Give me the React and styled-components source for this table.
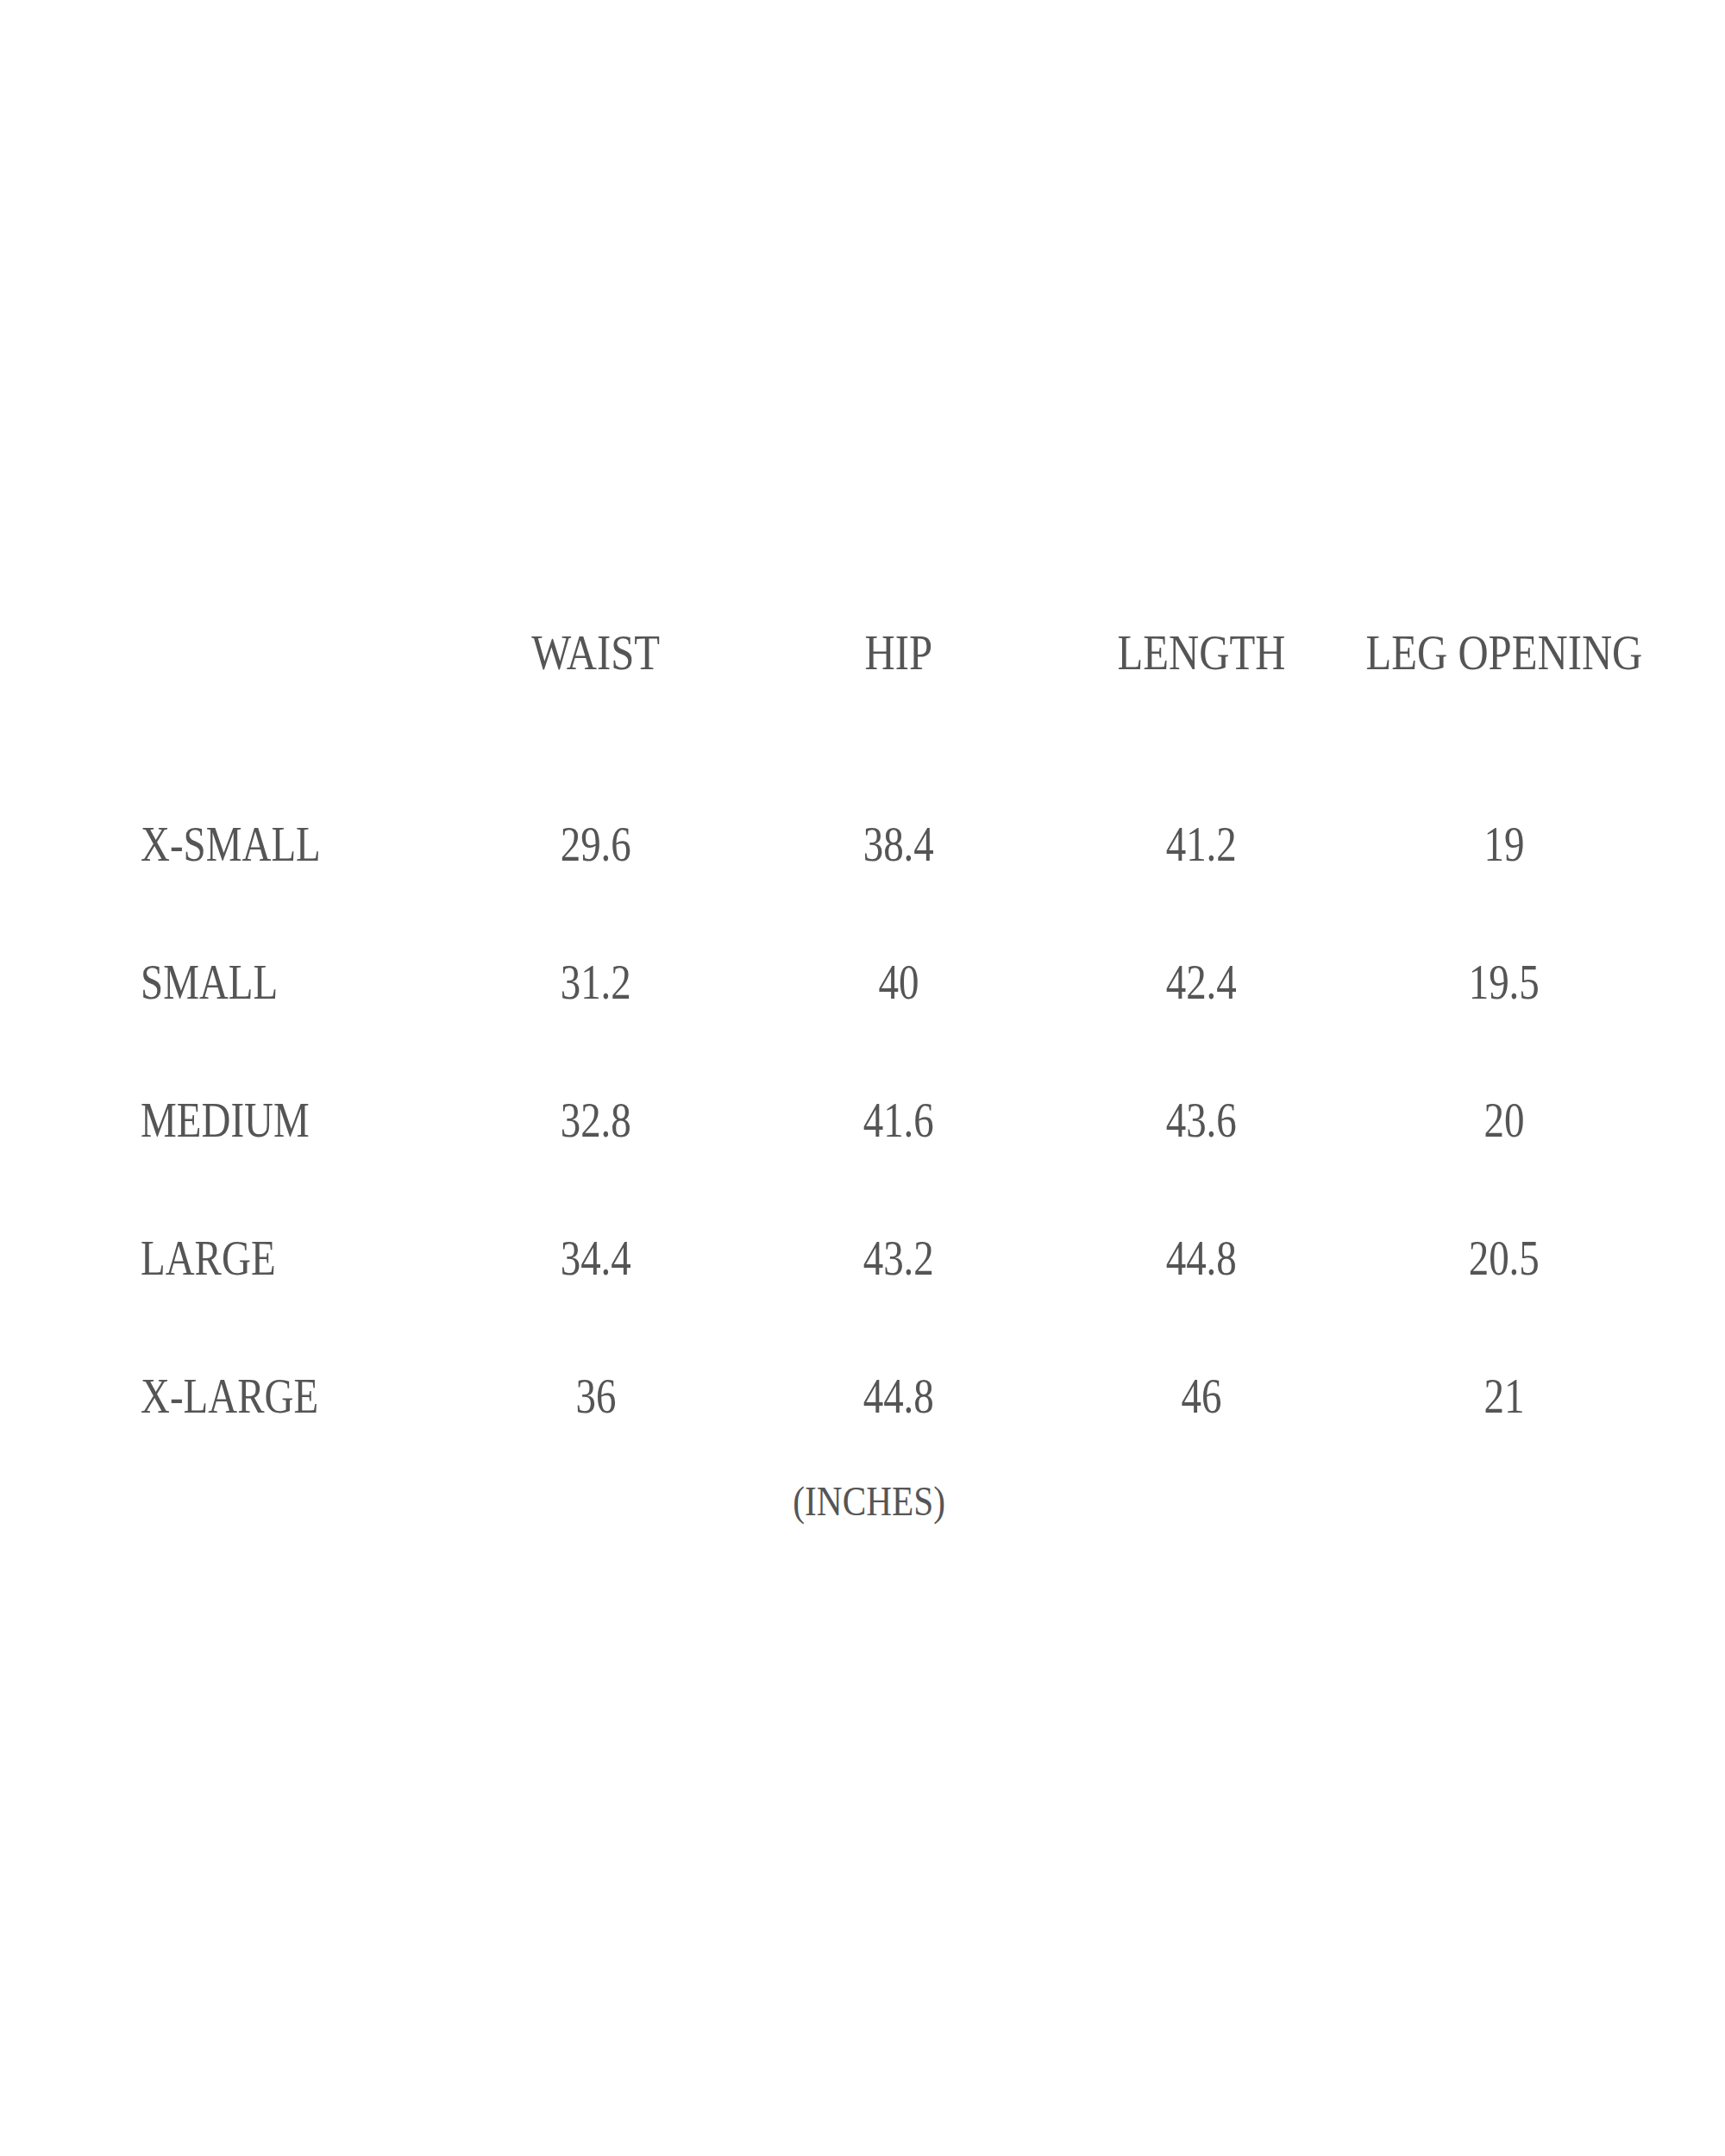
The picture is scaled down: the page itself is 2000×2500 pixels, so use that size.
import styled, {createGlobalStyle} from "styled-components";

const GlobalStyle = createGlobalStyle`
  body {
    margin: 0;
    background: #ffffff;
  }
`;

const Page = styled.div`
  width: 2000px;
  height: 2500px;
  padding-top: 677px;
  box-sizing: border-box;
  font-family: "Liberation Serif", "Times New Roman", serif;
  color: #555555;
`;

const Table = styled.div`
  margin-left: 163px;
  width: 1760px;
`;

const Row = styled.div`
  display: grid;
  grid-template-columns: 352px repeat(4, 351px);
  height: 160px;
  align-items: center;
  margin-bottom: ${p => p.$gap || 0}px;
`;

const Cell = styled.div`
  display: flex;
  justify-content: ${p => p.$left ? "flex-start" : "center"};
  font-size: 58px;
  line-height: 1;
`;

const Squeeze = styled.span`
  display: inline-block;
  flex-shrink: 0;
  white-space: nowrap;
  transform: scaleX(${p => p.$x || 0.82});
  transform-origin: ${p => p.$left ? "left" : "center"} center;
`;

const Unit = styled.div`
  width: 2000px;
  display: flex;
  justify-content: center;
  font-size: 48px;
  line-height: 84px;
  padding-left: 16px;
  box-sizing: border-box;
`;

const headers = ["WAIST", "HIP", "LENGTH", "LEG OPENING"];

const sizes = [
    ["X-SMALL", "29.6", "38.4", "41.2", "19"],
    ["SMALL", "31.2", "40", "42.4", "19.5"],
    ["MEDIUM", "32.8", "41.6", "43.6", "20"],
    ["LARGE", "34.4", "43.2", "44.8", "20.5"],
    ["X-LARGE", "36", "44.8", "46", "21"],
];

const App = () => {
    return (
        <>
            <GlobalStyle/>
            <Page>
                <Table>
                    <Row $gap={62}>
                        <Cell $left/>
                        {headers.map(h => (
                            <Cell key={h}><Squeeze $x={0.84}>{h}</Squeeze></Cell>
                        ))}
                    </Row>
                    {sizes.map(row => (
                        <Row key={row[0]}>
                            {row.map((v, i) => (
                                <Cell key={i} $left={i === 0}>
                                    <Squeeze $left={i === 0} $x={i === 0 ? 0.81 : 0.81}>{v}</Squeeze>
                                </Cell>
                            ))}
                        </Row>
                    ))}
                </Table>
                <Unit><Squeeze $x={0.86}>(INCHES)</Squeeze></Unit>
            </Page>
        </>
    )
}

export default App
